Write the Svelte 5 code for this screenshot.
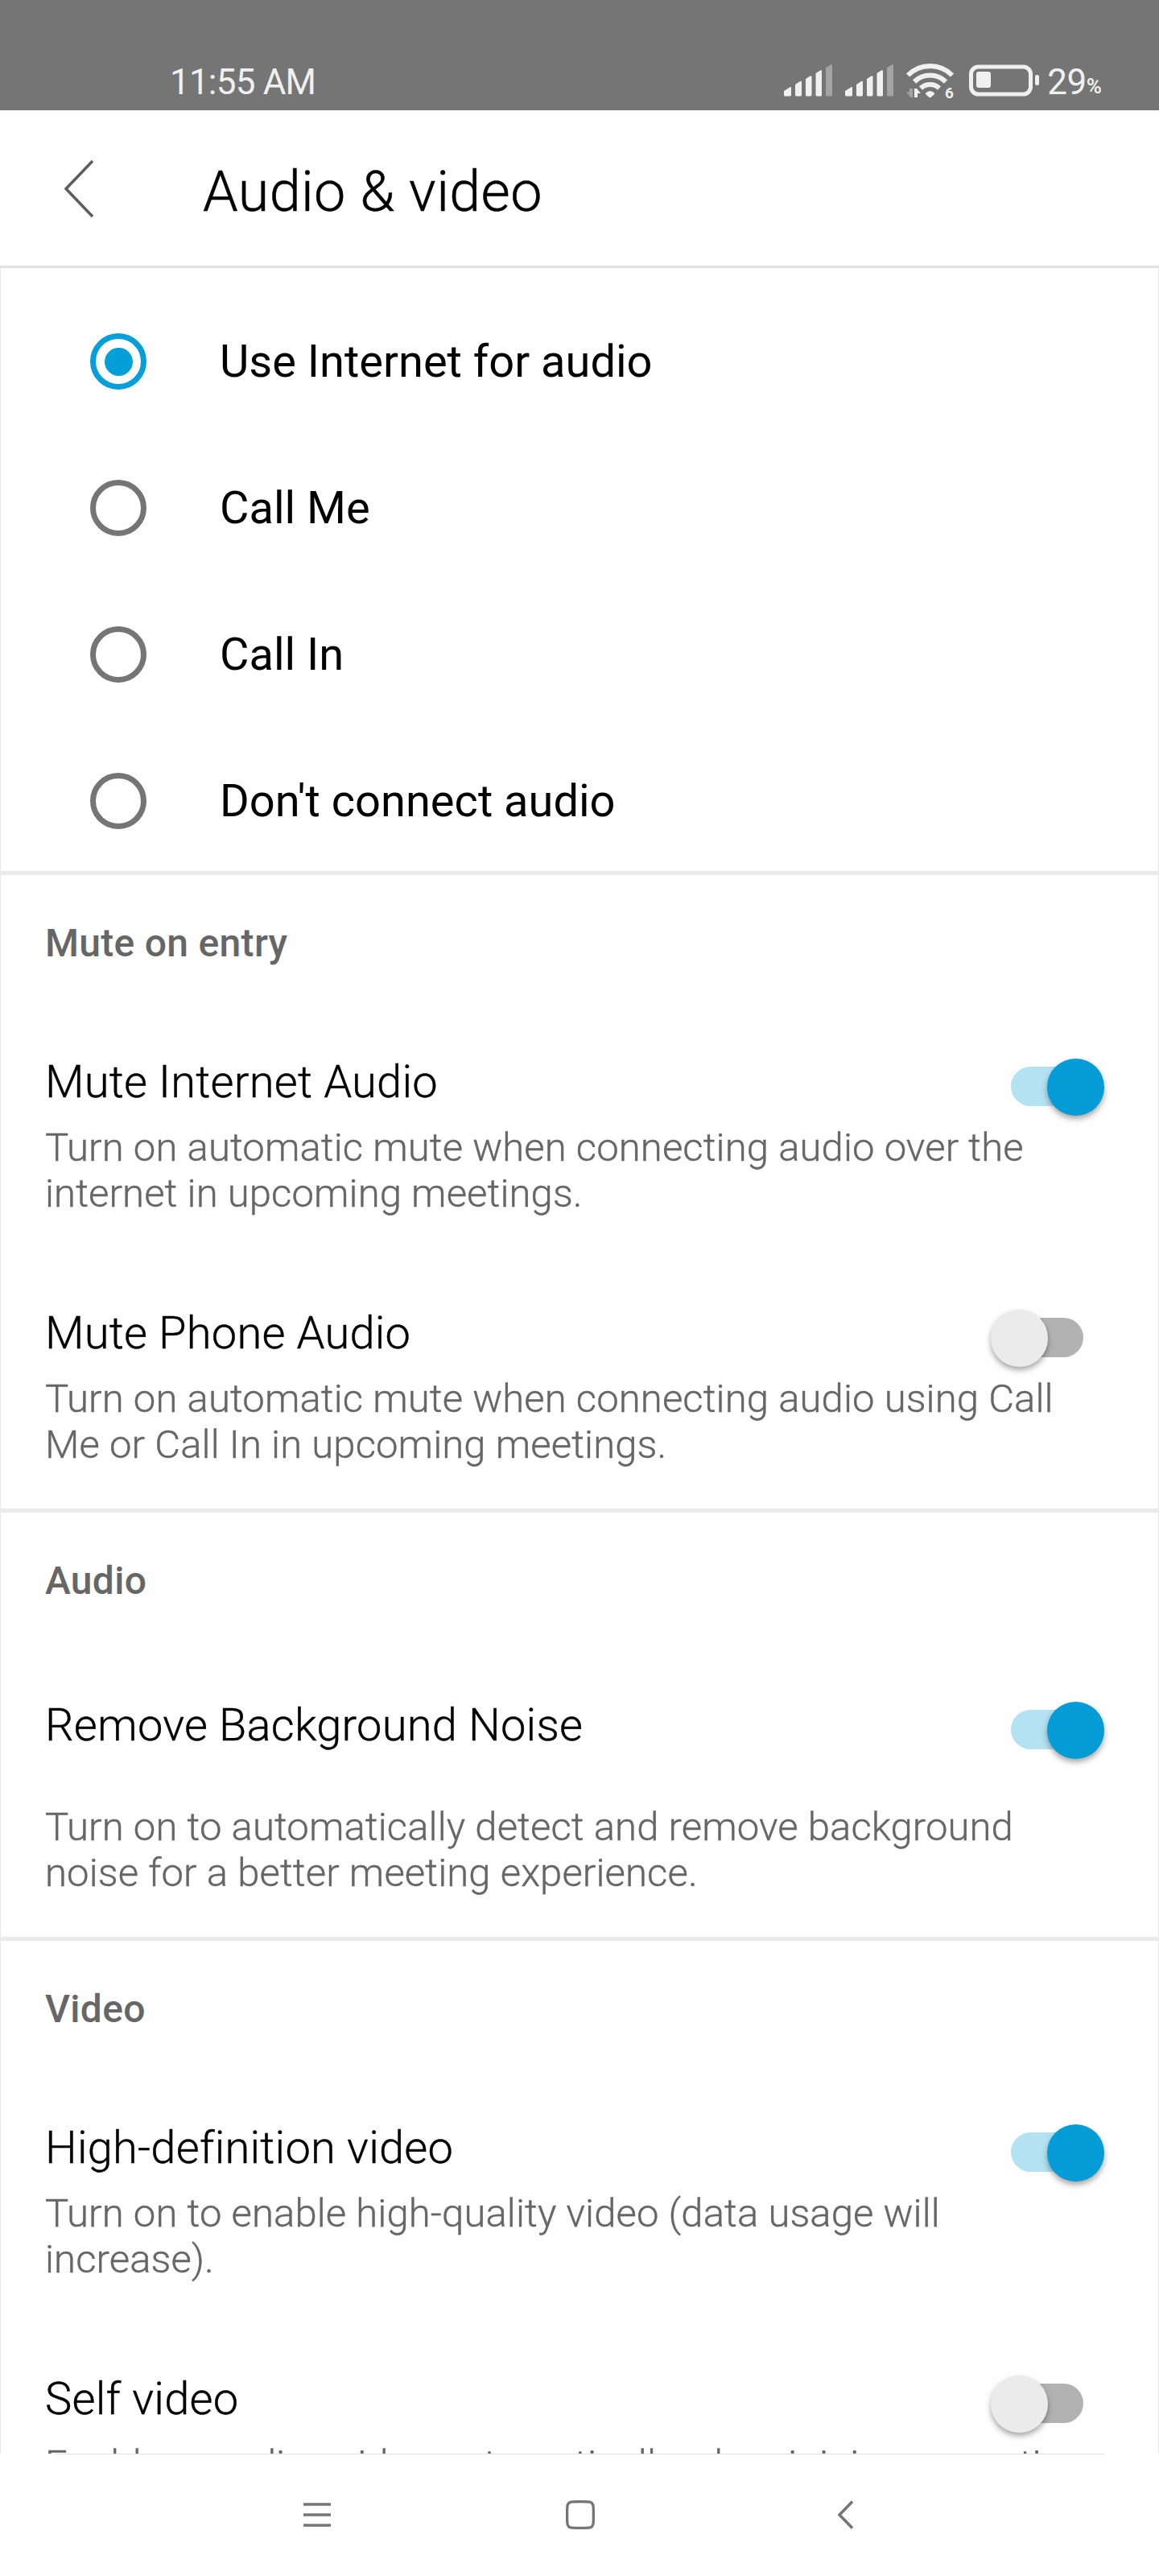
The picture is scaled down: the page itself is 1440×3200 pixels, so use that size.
<script lang="ts">
	let audioOptions = ['Use Internet for audio', 'Call Me', 'Call In', "Don't connect audio"];
	let selectedAudio = audioOptions[0];

	let sections = [
		{
			heading: 'Mute on entry',
			settings: [
				{
					title: 'Mute Internet Audio',
					text: 'Turn on automatic mute when connecting audio over the internet in upcoming meetings.',
					on: true,
					spaced: false
				},
				{
					title: 'Mute Phone Audio',
					text: 'Turn on automatic mute when connecting audio using Call Me or Call In in upcoming meetings.',
					on: false,
					spaced: false
				}
			]
		},
		{
			heading: 'Audio',
			settings: [
				{
					title: 'Remove Background Noise',
					text: 'Turn on to automatically detect and remove background noise for a better meeting experience.',
					on: true,
					spaced: true
				}
			]
		},
		{
			heading: 'Video',
			settings: [
				{
					title: 'High-definition video',
					text: 'Turn on to enable high-quality video (data usage will increase).',
					on: true,
					spaced: false
				},
				{
					title: 'Self video',
					text: 'Enables sending video automatically when joining a meeting.',
					on: false,
					spaced: false
				}
			]
		}
	];
</script>

<div class="screen">
	<div class="status">
		<span class="time">11:55 AM</span>
		<div class="indicators">
			{#each [0, 1] as sim (sim)}
				<svg class="signal" width="60" height="40" viewBox="0 0 60 40">
					<path d="M0 33l8-5q1-.6 1 1v9q0 1.500-1.500 1.500h-6q-1.500 0-1.500-1.500z" />
					<path d="M14 25l6-4q2-1 2 1v16q0 1.500-1.500 1.500h-5q-1.500 0-1.500-1.500z" />
					<path d="M27 18l5.500-3.500q2-1 2 1v22.500q0 1.500-1.500 1.500h-4.500q-1.500 0-1.500-1.500z" />
					<path d="M39.500 11l5.500-3.500q2-1 2 1v29.500q0 1.500-1.500 1.500h-4.500q-1.500 0-1.500-1.500z" />
					<path class="weak" d="M52 4l6-3.500q2-1 2 1v36.500q0 1.500-1.500 1.500h-5q-1.500 0-1.500-1.500z" />
				</svg>
			{/each}
			<svg class="wifi" width="60" height="46" viewBox="0 0 60 46">
				<g fill="none" stroke="#f0f0f0" stroke-width="6">
					<path d="M2 15.500a38.500 38.500 0 0 1 55 0" />
					<path d="M10 23.500a28 28 0 0 1 39 0" />
					<path d="M18 31.500a17 17 0 0 1 23 0" />
				</g>
				<path d="M24 37.500q5.500-5 11 0q.5 1-.5 2l-4 3.500q-1 .7-2 0l-4-3.500q-1-1-.5-2z" />
				<path class="weak" d="M4 32h4v11h-2.500l-5.500-6.500h4z" />
				<path d="M10 32h3l5 6h-4v5h-4z" />
				<text x="48" y="44">6</text>
			</svg>
			<svg class="battery" width="88" height="40" viewBox="0 0 88 40">
				<rect x="2.500" y="3" width="74" height="34" rx="9" fill="none" stroke="#f0f0f0" stroke-width="5" />
				<rect x="9" y="9" width="18" height="20" rx="3" />
				<rect x="82" y="13" width="5" height="13" rx="2.500" />
			</svg>
			<span class="level">29</span><span class="percent">%</span>
		</div>
	</div>

	<header>
		<svg width="40" height="72" viewBox="0 0 40 72">
			<path d="M36 2L3 36.500l33 34.500" fill="none" stroke="#5c5c5c" stroke-width="3.500" />
		</svg>
		<h1>Audio &amp; video</h1>
	</header>

	<main>
		<div class="options">
			{#each audioOptions as option}
				<div class="option">
					<span class="radio" class:selected={option === selectedAudio}></span>
					<span>{option}</span>
				</div>
			{/each}
		</div>

		{#each sections as section}
			<section>
				<h2>{section.heading}</h2>
				{#each section.settings as setting}
					<div class="setting" class:spaced={setting.spaced}>
						<div class="row">
							<h3>{setting.title}</h3>
							<span class="toggle" class:on={setting.on}><span class="knob"></span></span>
						</div>
						<p>{setting.text}</p>
					</div>
				{/each}
			</section>
		{/each}
	</main>

	<nav>
		<svg class="menu" width="34" height="36" viewBox="0 0 34 36">
			<path d="M0 5h34M0 18h34M0 31h34" stroke="#757575" stroke-width="3.500" />
		</svg>
		<svg class="home" width="36" height="36" viewBox="0 0 36 36">
			<path
				d="M8 1.800Q18 1.400 28 1.800Q33.800 2 34.200 8Q34.600 18 34.200 28Q33.800 34 28 34.200Q18 34.600 8 34.200Q2.200 34 1.800 28Q1.400 18 1.800 8Q2.200 2 8 1.800z"
				fill="none"
				stroke="#757575"
				stroke-width="3.300"
			/>
		</svg>
		<svg width="22" height="36" viewBox="0 0 22 36">
			<path d="M19 1.500L3 18l16 16.500" fill="none" stroke="#757575" stroke-width="3.500" />
		</svg>
	</nav>
</div>

<style>
	:global(body) {
		margin: 0;
		background-color: #fefefe;
	}

	.screen {
		display: flex;
		flex-direction: column;
		width: 1440px;
		height: 3200px;
		overflow: hidden;
		font-family: Roboto, sans-serif;
		color: #000;
		background-color: #fefefe;
	}

	h1,
	h2,
	h3,
	p {
		margin: 0;
	}

	svg {
		display: block;
		flex: none;
	}

	.status {
		display: flex;
		flex: none;
		justify-content: space-between;
		height: 137px;
		padding: 0 71px 0 211px;
		box-sizing: border-box;
		color: #f0f0f0;
		background-color: #757575;
	}

	.time {
		padding-top: 76px;
		font-size: 44px;
		line-height: 52px;
		letter-spacing: -0.8px;
	}

	.indicators {
		display: flex;
		align-items: flex-start;
		fill: #f0f0f0;
	}

	.signal {
		margin: 80px 16px 0 0;
	}

	.weak {
		fill: #a3a3a3;
	}

	.wifi {
		margin: 78px 18px 0 0;
		overflow: visible;
	}

	.wifi text {
		font-size: 19px;
		font-weight: 700;
	}

	.battery {
		margin: 80px 9px 0 0;
	}

	.level {
		padding-top: 76px;
		font-size: 44px;
		line-height: 52px;
		letter-spacing: -0.5px;
	}

	.percent {
		padding-top: 92px;
		font-size: 26px;
		line-height: 30px;
		font-weight: 600;
	}

	header {
		display: flex;
		flex: none;
		align-items: center;
		gap: 133px;
		height: 196px;
		padding-left: 79px;
		box-sizing: border-box;
		border-bottom: 3px solid #e0e0e0;
	}

	h1 {
		padding-top: 8px;
		font-size: 70px;
		font-weight: 300;
		line-height: 82px;
		letter-spacing: 0.4px;
		-webkit-text-stroke: 0.5px #000;
	}

	main {
		flex: 1;
		min-height: 0;
		overflow: hidden;
		border-right: 1px solid #eaeaea;
		border-left: 1px solid #eaeaea;
	}

	.options {
		height: 724px;
		padding: 25px 0 0 111px;
	}

	.option {
		display: flex;
		align-items: center;
		gap: 91px;
		height: 182px;
		font-size: 56px;
	}

	.radio {
		display: flex;
		align-items: center;
		justify-content: center;
		width: 70px;
		height: 70px;
		box-sizing: border-box;
		border: 7px solid #757575;
		border-radius: 50%;
	}

	.radio.selected {
		border-color: #049fd9;
	}

	.radio.selected::after {
		content: '';
		width: 35px;
		height: 35px;
		border-radius: 50%;
		background-color: #049fd9;
	}

	section {
		padding: 53px 0 51px 55px;
		border-top: 5px solid #eaeaea;
	}

	h2 {
		margin-bottom: 100px;
		font-size: 48px;
		font-weight: 500;
		line-height: 64px;
		letter-spacing: 0.3px;
		color: #666;
	}

	.setting + .setting {
		margin-top: 105px;
	}

	.row {
		display: flex;
		justify-content: space-between;
		height: 93px;
		padding-right: 68px;
	}

	h3 {
		font-size: 56px;
		font-weight: 300;
		line-height: 80px;
		letter-spacing: 0.24px;
		-webkit-text-stroke: 0.4px #000;
	}

	.toggle {
		display: flex;
		align-items: center;
		width: 90px;
		height: 49px;
		margin: 21px 25px 0 0;
		border-radius: 25px;
		background-color: #b2b2b2;
	}

	.knob {
		flex: none;
		width: 70.500px;
		height: 70.500px;
		margin: 2px 0 0 -25px;
		border-radius: 50%;
		background-color: #ebebeb;
		box-shadow: 0 4px 7px rgba(0, 0, 0, 0.35);
	}

	.toggle.on {
		background-color: #b3e2f3;
	}

	.toggle.on .knob {
		margin-left: 45px;
		background-color: #049cd6;
	}

	p {
		width: 1312px;
		font-size: 49px;
		font-weight: 300;
		line-height: 57px;
		letter-spacing: 0.11px;
		color: #666;
		-webkit-text-stroke: 0.4px #666;
	}

	.spaced {
		padding-top: 7px;
	}

	.spaced .row {
		height: 138px;
	}

	nav {
		display: flex;
		flex: none;
		height: 152px;
		margin: 0 68px;
		padding: 57px 0 0 309px;
		box-sizing: border-box;
		border-top: 1px solid #e3e3e3;
	}

	.menu {
		margin-right: 292px;
	}

	.home {
		margin-right: 301px;
	}
</style>
